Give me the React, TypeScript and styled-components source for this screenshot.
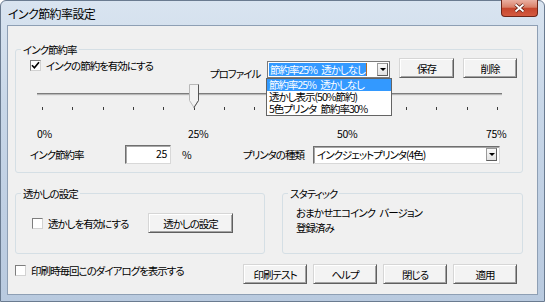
import React from 'react';
import styled, { createGlobalStyle } from 'styled-components';

const GlobalStyle = createGlobalStyle`
  html, body {
    margin: 0;
    padding: 0;
  }
  body {
    width: 545px;
    height: 302px;
    overflow: hidden;
    font-family: "Noto Sans CJK JP", "Noto Sans", sans-serif;
    font-size: 10.5px;
    letter-spacing: -1px;
    word-spacing: 3px;
    font-feature-settings: "palt";
    color: #000;
  }
`;

const profiles = ['節約率25% 透かしなし', '透かし表示(50%節約)', '5色プリンタ 節約率30%'];
const scaleLabels = ['0%', '25%', '50%', '75%'];
const TICKS = 16;
const SAVING = 25;
const MAX = 75;
const TICK_SPAN = 455;

const Window = styled.div`
  width: 545px;
  height: 302px;
  box-sizing: border-box;
  display: flex;
  flex-direction: column;
  border: 1px solid #6a7b90;
  border-radius: 6px 6px 0 0;
  background: linear-gradient(180deg, #d9e4f0 0%, #c8d7e8 35%, #bfcfe3 70%, #b9cadf 100%);
`;

const TitleBar = styled.div`
  height: 24px;
  display: flex;
  align-items: center;
  justify-content: space-between;
  padding: 0 6px 0 7px;
`;

const TitleText = styled.span`
  font-size: 12px;
  letter-spacing: -0.6px;
  line-height: 14px;
  margin-top: 1px;
`;

const CloseButton = styled.div`
  align-self: flex-start;
  width: 37px;
  height: 17px;
  box-sizing: border-box;
  margin-top: -1px;
  border: 1px solid #6e2518;
  border-top: none;
  border-radius: 0 0 4px 4px;
  background: linear-gradient(180deg, #eab0a2 0%, #d98069 45%, #c6462d 52%, #d45a40 100%);
  display: flex;
  align-items: center;
  justify-content: center;
`;

const Client = styled.div`
  flex: 1;
  margin: 0 6px 6px 6px;
  border: 1px solid #8e9fb4;
  background: #f0f0f0;
  padding: 23px 0 0 7px;
  display: flex;
  flex-direction: column;
`;

const GroupBox = styled.div<{ $w: number; $h: number }>`
  position: relative;
  width: ${p => p.$w}px;
  height: ${p => p.$h}px;
  box-sizing: border-box;
  border: 1px solid #d5dfe5;
  border-radius: 3px;
`;

const GroupTitle = styled.span`
  position: absolute;
  top: -7px;
  left: 5px;
  padding: 0 2px;
  line-height: 13px;
  background: #f0f0f0;
`;

const InkBody = styled.div`
  padding: 9px 0 0 14px;
  display: flex;
  flex-direction: column;
`;

const TopRow = styled.div`
  height: 22px;
  display: flex;
  align-items: flex-start;
`;

const CheckField = styled.label<{ $w: number }>`
  width: ${p => p.$w}px;
  flex: none;
  display: flex;
  align-items: center;
  gap: 5px;
  line-height: 13px;
  white-space: nowrap;
`;

const CheckBox = styled.span`
  width: 11px;
  height: 11px;
  box-sizing: border-box;
  flex: none;
  border-style: solid;
  border-width: 1px;
  border-color: #7d7d7d #d2d2d2 #d2d2d2 #7d7d7d;
  background: #fff;
  display: flex;
  align-items: center;
  justify-content: center;
`;

const TextLabel = styled.span<{ $w?: number; $mt?: number; $pl?: number }>`
  width: ${p => (p.$w ? `${p.$w}px` : 'auto')};
  margin-top: ${p => p.$mt ?? 0}px;
  padding-left: ${p => p.$pl ?? 0}px;
  box-sizing: border-box;
  flex: none;
  line-height: 13px;
  white-space: nowrap;
`;

const Combo = styled.div`
  position: relative;
  width: 123px;
  height: 17px;
  margin-top: 2px;
  flex: none;
  box-sizing: border-box;
  border: 1px solid #7a7a7a;
  background: #fff;
  display: flex;
  align-items: center;
  padding: 0 1px 0 1px;
`;

const SelectedText = styled.span`
  background: #3399ff;
  color: #fff;
  line-height: 13px;
  padding: 0 1px;
  white-space: nowrap;
  border-right: 1px solid #b06a2a;
`;

const ArrowBox = styled.span`
  margin-left: auto;
  width: 11px;
  height: 13px;
  flex: none;
  box-sizing: border-box;
  border: 1px solid #9a9a9a;
  border-right-color: #5e5e5e;
  border-bottom-color: #5e5e5e;
  background: linear-gradient(180deg, #fafafa, #e2e2e2);
  display: flex;
  align-items: center;
  justify-content: center;
`;

const ArrowGlyph = styled.span`
  width: 0;
  height: 0;
  border-left: 3px solid transparent;
  border-right: 3px solid transparent;
  border-top: 3px solid #000;
`;

const DropList = styled.ul`
  position: absolute;
  top: 16px;
  left: -2px;
  width: 126px;
  box-sizing: border-box;
  margin: 0;
  padding: 0;
  list-style: none;
  background: #fff;
  border: 1px solid #646464;
  z-index: 2;
`;

const DropItem = styled.li<{ $selected?: boolean }>`
  height: 12px;
  line-height: 12px;
  padding-left: 2px;
  white-space: nowrap;
  background: ${p => (p.$selected ? '#3399ff' : 'transparent')};
  color: ${p => (p.$selected ? '#fff' : '#000')};
`;

const Button = styled.button<{ $w: number; $ml?: number; $mt?: number }>`
  width: ${p => p.$w}px;
  height: 20px;
  margin: ${p => p.$mt ?? 0}px 0 0 ${p => p.$ml ?? 0}px;
  padding: 0;
  flex: none;
  box-sizing: border-box;
  font: inherit;
  letter-spacing: inherit;
  font-feature-settings: inherit;
  line-height: 13px;
  color: #000;
  background: #f3f3f3;
  border-style: solid;
  border-width: 1px;
  border-color: #d6d6d6 #5f5f5f #5f5f5f #d6d6d6;
  box-shadow: inset 1px 1px 0 #ffffff, inset -1px -1px 0 #a3a3a3;
  border-radius: 0;
`;

const Slider = styled.div`
  position: relative;
  margin: 3px 0 0 7px;
  width: 465px;
`;

const TrackArea = styled.div`
  height: 20px;
  display: flex;
  align-items: center;
`;

const Track = styled.div`
  width: 100%;
  height: 3px;
  box-sizing: border-box;
  border-top: 1px solid #7c7c7c;
  border-bottom: 1px solid #e6e6e6;
  background: #b8b8b8;
`;

const Thumb = styled.svg`
  position: absolute;
  top: 0;
`;

const TickRow = styled.div`
  margin-top: 3px;
  height: 3px;
  padding: 0 4px 0 5px;
  display: flex;
  justify-content: space-between;
`;

const Tick = styled.span`
  width: 1px;
  height: 3px;
  background: #3c3c3c;
`;

const ScaleRow = styled.div`
  margin: 17px 0 0 7px;
  display: grid;
  grid-template-columns: 151px 149px 149px auto;
  line-height: 13px;
  letter-spacing: -0.3px;
`;

const FieldRow = styled.div`
  margin-top: 5px;
  height: 19px;
  display: flex;
  align-items: center;
`;

const NumberBox = styled.div`
  width: 46px;
  height: 19px;
  flex: none;
  box-sizing: border-box;
  border-style: solid;
  border-width: 1px;
  border-color: #6f6f6f #d8d8d8 #d8d8d8 #6f6f6f;
  box-shadow: inset 1px 1px 0 #a8a8a8;
  background: #fff;
  text-align: right;
  padding-right: 3px;
  line-height: 15px;
  letter-spacing: -0.3px;
`;

const SelectBox = styled.div`
  width: 187px;
  height: 18px;
  flex: none;
  box-sizing: border-box;
  border-style: solid;
  border-width: 1px;
  border-color: #6f6f6f #d8d8d8 #d8d8d8 #6f6f6f;
  box-shadow: inset 1px 1px 0 #a8a8a8;
  background: #fff;
  display: flex;
  align-items: center;
  padding: 0 2px 0 3px;
  line-height: 13px;
`;

const MiddleRow = styled.div`
  margin-top: 20px;
  display: flex;
  gap: 17px;
`;

const WatermarkBody = styled.div`
  padding: 19px 0 0 16px;
  display: flex;
  align-items: center;
`;

const StaticBody = styled.div`
  padding: 11px 0 0 13px;
  line-height: 15px;
`;

const BottomRow = styled.div`
  margin-top: 10px;
  display: flex;
  align-items: flex-start;
  gap: 6px;
`;

const CheckMark = () => (
  <svg width="9" height="9" viewBox="0 0 9 9">
    <path d="M1 4.2 L3.4 6.8 L8 1.2" fill="none" stroke="#000" strokeWidth="1.6" />
  </svg>
);

const Check: React.FC<{ checked?: boolean; w: number; children: React.ReactNode }> = ({
  checked,
  w,
  children,
}) => (
  <CheckField $w={w}>
    <CheckBox>{checked && <CheckMark />}</CheckBox>
    {children}
  </CheckField>
);

const Arrow = () => (
  <ArrowBox>
    <ArrowGlyph />
  </ArrowBox>
);

const App: React.FC = () => {
  const thumbLeft = 5 + (SAVING / MAX) * TICK_SPAN - 5;

  return (
    <>
      <GlobalStyle />
      <Window>
        <TitleBar>
          <TitleText>インク節約率設定</TitleText>
          <CloseButton>
            <svg width="13" height="10" viewBox="0 0 13 10">
              <path d="M2.5 1.5 L10.5 8.5 M10.5 1.5 L2.5 8.5" stroke="#5a1a10" strokeWidth="3.4" />
              <path d="M2.5 1.5 L10.5 8.5 M10.5 1.5 L2.5 8.5" stroke="#fff" strokeWidth="1.8" />
            </svg>
          </CloseButton>
        </TitleBar>

        <Client>
          <GroupBox $w={508} $h={124}>
            <GroupTitle>インク節約率</GroupTitle>
            <InkBody>
              <TopRow>
                <Check checked w={180}>
                  インクの節約を有効にする
                </Check>
                <TextLabel $w={57} $mt={8}>
                  プロファイル
                </TextLabel>
                <Combo>
                  <SelectedText>{profiles[0]}</SelectedText>
                  <Arrow />
                  <DropList>
                    {profiles.map((p, i) => (
                      <DropItem key={p} $selected={i === 0}>
                        {p}
                      </DropItem>
                    ))}
                  </DropList>
                </Combo>
                <Button $w={55} $ml={9} $mt={-1}>
                  保存
                </Button>
                <Button $w={54} $ml={9} $mt={-1}>
                  削除
                </Button>
              </TopRow>

              <Slider>
                <TrackArea>
                  <Track />
                </TrackArea>
                <Thumb width="11" height="25" viewBox="0 0 11 25" style={{ left: thumbLeft }}>
                  <path d="M0.5 0.5 H9.5 V16.5 L5 23.5 L0.5 16.5 Z" fill="#f2f2f2" stroke="#b8b8b8" />
                  <path d="M9.5 0.5 V16.5 L5 23.5" fill="none" stroke="#555" />
                </Thumb>
                <TickRow>
                  {Array.from({ length: TICKS }, (_, i) => (
                    <Tick key={i} />
                  ))}
                </TickRow>
              </Slider>

              <ScaleRow>
                {scaleLabels.map(l => (
                  <span key={l}>{l}</span>
                ))}
              </ScaleRow>

              <FieldRow>
                <TextLabel $w={95}>インク節約率</TextLabel>
                <NumberBox>25</NumberBox>
                <TextLabel $w={72} $pl={11}>
                  %
                </TextLabel>
                <TextLabel $w={70}>プリンタの種類</TextLabel>
                <SelectBox>
                  <span>インクジェットプリンタ(4色)</span>
                  <Arrow />
                </SelectBox>
              </FieldRow>
            </InkBody>
          </GroupBox>

          <MiddleRow>
            <GroupBox $w={250} $h={61}>
              <GroupTitle>透かしの設定</GroupTitle>
              <WatermarkBody>
                <Check w={116}>透かしを有効にする</Check>
                <Button $w={85}>透かしの設定</Button>
              </WatermarkBody>
            </GroupBox>
            <GroupBox $w={241} $h={61}>
              <GroupTitle>スタティック</GroupTitle>
              <StaticBody>
                <div>おまかせエコインク バージョン</div>
                <div>登録済み</div>
              </StaticBody>
            </GroupBox>
          </MiddleRow>

          <BottomRow>
            <Check w={222}>印刷時毎回このダイアログを表示する</Check>
            <Button $w={64}>印刷テスト</Button>
            <Button $w={64}>ヘルプ</Button>
            <Button $w={64}>閉じる</Button>
            <Button $w={64}>適用</Button>
          </BottomRow>
        </Client>
      </Window>
    </>
  );
};

export default App;
